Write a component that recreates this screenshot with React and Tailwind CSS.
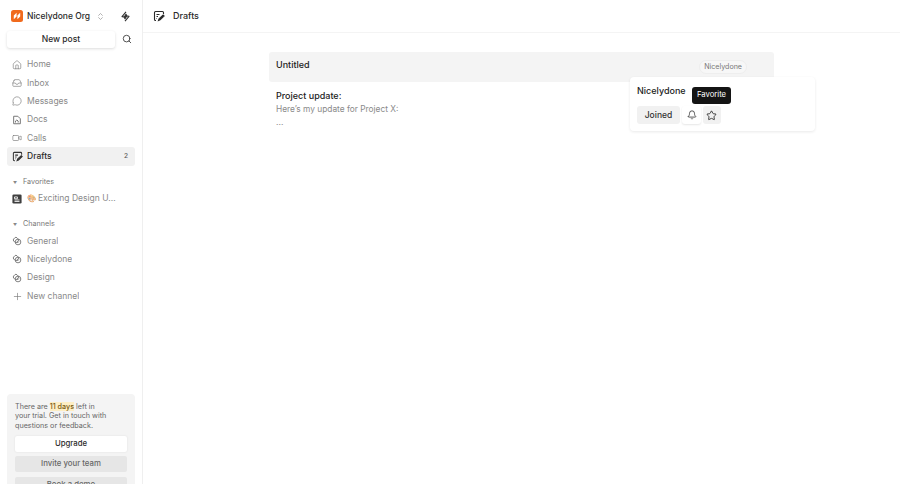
import React from 'react'
import { Home, Inbox, MessageCircle, ChevronsUpDown, Search, Video, Plus, Bell, Star } from 'lucide-react'

function Logo() {
  return (
    <svg width="12" height="12" viewBox="0 0 12 12">
      <rect width="12" height="12" rx="2.5" fill="#f06a1d" />
      <path d="M2.8 9.2V5.6L5.6 2.8v3.6zM6.4 9.2V5.6L9.2 2.8v3.6z" fill="#fff" />
    </svg>
  )
}

function BoltIcon() {
  return (
    <svg width="9" height="11" viewBox="0 0 9 11" className="ml-auto text-[#333]" fill="none" stroke="currentColor" strokeWidth="1.1" strokeLinejoin="round">
      <path d="M5 .8L1 5.6l2.2.4M4 10.2l4-4.8-2.2-.4" />
      <path d="M5 3.2L3.2 6l.8 1.8L5.8 5z" fill="currentColor" />
    </svg>
  )
}

function ChannelIcon() {
  return (
    <svg width="10" height="10" viewBox="0 0 12 12" fill="none" stroke="currentColor" strokeWidth="1.1">
      <rect x="2" y="2" width="5.5" height="5.5" rx="1.8" transform="rotate(45 4.7 4.7)" />
      <circle cx="7.2" cy="7.2" r="3.4" />
      <path d="M5.8 7.2l1 1 1.6-1.8" />
    </svg>
  )
}

function DocIcon() {
  return (
    <svg width="10" height="10" viewBox="0 0 12 12" fill="none" stroke="currentColor" strokeWidth="1.2">
      <path d="M2 1.5h5l3 3v6H2z" strokeLinejoin="round" />
      <path d="M4.2 9V7.2l1.6-1.2 1.6 1.2V9" />
    </svg>
  )
}

function FavIcon() {
  return (
    <svg width="10" height="10" viewBox="0 0 12 12">
      <rect x="0.5" y="0.5" width="11" height="11" rx="1.5" fill="#3f3f3f" />
      <path d="M3 3.5h3.5v2.2H3zM3 7.2h6M3 9h6" stroke="#fff" strokeWidth="1" fill="none" />
    </svg>
  )
}

function DraftIcon({ size = 11 }) {
  return (
    <svg width={size} height={size} viewBox="0 0 12 12" fill="none" stroke="currentColor" strokeWidth="1.1">
      <path d="M10.5 4V2.5a1 1 0 0 0-1-1h-7a1 1 0 0 0-1 1v7a1 1 0 0 0 1 1H3" />
      <path d="M3.5 4.5h3M3.5 6.5h1.5M3.5 8.5h0.5" />
      <path d="M5.5 10.5l.6-1.8 4-3.7 1 1-4 3.8z" fill="currentColor" />
    </svg>
  )
}

function NavItem({ icon, label, emoji, active, badge }) {
  return (
    <div className={`flex items-center h-[18.4px] rounded-[3px] pl-[5px] pr-[7px] ${active ? 'bg-[#f1f1f1] text-[#2b2b2b] font-medium' : 'text-[#8a8a8a]'}`}>
      <span className={`w-[15px] flex-none flex items-center ${active ? 'text-[#333]' : 'text-[#777]'}`}>{icon}</span>
      {emoji && <span className="w-[11px] flex-none text-[7.5px] opacity-70">{emoji}</span>}
      <span className="truncate">{label}</span>
      {badge && <span className="ml-auto text-[6.5px] text-[#555]">{badge}</span>}
    </div>
  )
}

function SectionLabel({ children }) {
  return (
    <div className="flex items-center pl-[13px] gap-[6px] text-[7.2px] text-[#777] h-[12px]">
      <span className="text-[4px] text-[#888]">▼</span>
      {children}
    </div>
  )
}

export default function App() {
  return (
    <div className="flex h-screen overflow-hidden bg-white text-[8.5px] font-['Inter',sans-serif]">
      <aside className="w-[143px] flex-none border-r border-[#efefef] overflow-hidden flex flex-col">
        <div className="h-[394px] flex-none">
          <div className="flex items-center h-[33px] pl-[11px] pr-[12px] pb-[1px]">
            <Logo />
            <span className="ml-[4px] font-medium text-[#2b2b2b]">Nicelydone Org</span>
            <ChevronsUpDown size={9} className="ml-[6px] text-[#999]" />
            <BoltIcon />
          </div>
          <div className="flex items-center h-[17px] -mt-[2.5px] pl-[7px] pr-[7px]">
            <div className="w-[108px] h-[17px] flex items-center justify-center rounded-[3px] bg-white shadow-[0_1px_3px_rgba(0,0,0,0.14)] font-medium text-[#2b2b2b]">New post</div>
            <Search size={10} strokeWidth={2} className="ml-auto mr-[3px] text-[#333]" />
          </div>
          <nav className="mt-[8px] px-[7px]">
            <NavItem icon={<Home size={10} strokeWidth={1.5} />} label="Home" />
            <NavItem icon={<Inbox size={10} strokeWidth={1.5} />} label="Inbox" />
            <NavItem icon={<MessageCircle size={10} strokeWidth={1.5} />} label="Messages" />
            <NavItem icon={<DocIcon />} label="Docs" />
            <NavItem icon={<Video size={10} strokeWidth={1.5} />} label="Calls" />
            <NavItem icon={<DraftIcon />} label="Drafts" active badge="2" />
          </nav>
          <div className="mt-[11px]">
            <SectionLabel>Favorites</SectionLabel>
            <div className="mt-[0.5px] px-[7px]">
              <NavItem icon={<FavIcon />} emoji="🎨" label="Exciting Design U..." />
            </div>
          </div>
          <div className="mt-[11px]">
            <SectionLabel>Channels</SectionLabel>
            <div className="mt-[1px] px-[7px]">
              <NavItem icon={<ChannelIcon />} label="General" />
              <NavItem icon={<ChannelIcon />} label="Nicelydone" />
              <NavItem icon={<ChannelIcon />} label="Design" />
              <NavItem icon={<Plus size={11} strokeWidth={1.4} />} label="New channel" />
            </div>
          </div>
        </div>
        <div className="mx-[7px] flex-none rounded-[4px] bg-[#f4f4f4] px-[8px] pt-[7.5px] pb-[8px] text-[7.2px] leading-[9.7px] text-[#666]">
          <p>There are <span className="bg-[#fdeec4] font-medium text-[#7a5a10]">11 days</span> left in<br />your trial. Get in touch with<br />questions or feedback.</p>
          <div className="mt-[5px] h-[16px] flex items-center justify-center rounded-[2px] bg-white text-[7.8px] font-medium text-[#2b2b2b] shadow-[0_0_2px_rgba(0,0,0,0.1)]">Upgrade</div>
          <div className="mt-[4.5px] h-[16px] flex items-center justify-center rounded-[2px] bg-[#e6e6e6] text-[7.8px] font-medium text-[#666]">Invite your team</div>
          <div className="mt-[5px] h-[16px] flex items-center justify-center rounded-[2px] bg-[#e6e6e6] text-[7.8px] font-medium text-[#666]">Book a demo</div>
        </div>
      </aside>
      <main className="flex-1 min-w-0">
        <header className="h-[33px] flex items-center pl-[10px] border-b border-[#f4f4f4] text-[#2b2b2b]">
          <DraftIcon size={12} />
          <span className="ml-[8px] text-[9px] font-medium">Drafts</span>
        </header>
        <div className="relative ml-[126px] mt-[19px] w-[505px]">
          <div className="h-[30px] rounded-[3px] bg-[#f4f4f4] px-[7px] pt-[6px] text-[9px] font-medium text-[#222]">Untitled</div>
          <div className="px-[7px] pt-[7px]">
            <div className="text-[9px] font-medium text-[#222] leading-[13px]">Project update:</div>
            <div className="mt-[1px] text-[8.35px] text-[#8a8a8a] leading-[13px]">Here’s my update for Project X:</div>
            <div className="text-[#8a8a8a] leading-[13px]">...</div>
          </div>
          <span className="absolute right-[27px] top-[8px] h-[14px] flex items-center rounded-full border border-[#eee] bg-[#f7f7f7] px-[4px] text-[7.1px] text-[#777]">Nicelydone</span>
          <div className="absolute left-[361px] top-[25px] w-[185px] h-[54px] rounded-[4px] bg-white shadow-[0_1px_3px_rgba(0,0,0,0.09)] px-[7px] pt-[7px]">
            <div className="text-[9px] font-medium text-[#222] leading-[13px]">Nicelydone</div>
            <div className="mt-[9px] flex items-center">
              <div className="w-[43px] h-[18px] flex items-center justify-center rounded-[3px] bg-[#f1f1f1] font-medium text-[#333]">Joined</div>
              <div className="ml-[2px] w-[19px] h-[18px] flex items-center justify-center rounded-[3px] bg-white shadow-[0_1px_2px_rgba(0,0,0,0.1)] text-[#222]"><Bell size={10} strokeWidth={1.8} /></div>
              <div className="ml-[1.5px] w-[18px] h-[18px] flex items-center justify-center rounded-[3px] bg-[#f1f1f1] text-[#222]"><Star size={11} strokeWidth={1.8} /></div>
            </div>
            <div className="absolute left-[62px] top-[9.5px] h-[17px] w-[39px] flex items-center justify-center rounded-[3px] bg-[#141414] text-[7.7px] text-white">Favorite</div>
          </div>
        </div>
      </main>
    </div>
  )
}
